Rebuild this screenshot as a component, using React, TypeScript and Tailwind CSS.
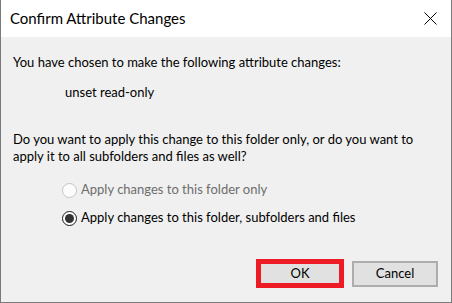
function Radio({ checked, disabled, label }: { checked?: boolean; disabled?: boolean; label: string }) {
  return (
    <div className="flex items-center h-[20px]">
      <span
        className={`w-[15px] h-[15px] rounded-full border flex items-center justify-center ${
          disabled ? "border-[#c4c4c4] bg-[#fcfcfc]" : "border-[#1a1a1a] bg-white"
        }`}
      >
        {checked && <span className="w-[9px] h-[9px] rounded-full bg-[#333333]" />}
      </span>
      <span className={`ml-[4px] ${disabled ? "text-[#6d6d6d]" : "text-black"}`}>{label}</span>
    </div>
  );
}

export default function App() {
  return (
    <div
      className="w-[452px] h-[303px] flex flex-col bg-[#f0f0f0] border-x border-b border-[#7a7a7a] text-black text-[13px]"
      style={{ fontFamily: 'Lato, "Noto Sans", sans-serif' }}
    >
      <div className="h-[37px] shrink-0 bg-white flex items-center pl-[9px] pr-[14px]">
        <span className="flex-1 text-[15px]">Confirm Attribute Changes</span>
        <svg width="13" height="13" viewBox="0 0 13 13" className="text-black">
          <path d="M0.5 0.5 L12.5 12.5 M12.5 0.5 L0.5 12.5" stroke="currentColor" strokeWidth="1" />
        </svg>
      </div>

      <div className="flex-1 flex flex-col px-[12px] pb-[14px]">
        <p className="mt-[15px] leading-[20px]">You have chosen to make the following attribute changes:</p>
        <p className="mt-[10px] ml-[52px] leading-[20px]">unset read-only</p>

        <p className="mt-[29px] leading-[17px]">
          Do you want to apply this change to this folder only, or do you want to
          <br />
          apply it to all subfolders and files as well?
        </p>

        <div className="mt-[15px] ml-[49px] flex flex-col gap-[8px]">
          <Radio disabled label="Apply changes to this folder only" />
          <Radio checked label="Apply changes to this folder, subfolders and files" />
        </div>

        <div className="mt-auto flex items-center justify-end gap-[8px] pr-[1px]">
          <button className="w-[88px] h-[29px] border-[5px] border-[#ed1c24] bg-[#e1e1e1] text-black">OK</button>
          <button className="w-[86px] h-[26px] border-2 border-[#adadad] bg-[#e1e1e1] text-black">Cancel</button>
        </div>
      </div>
    </div>
  );
}
